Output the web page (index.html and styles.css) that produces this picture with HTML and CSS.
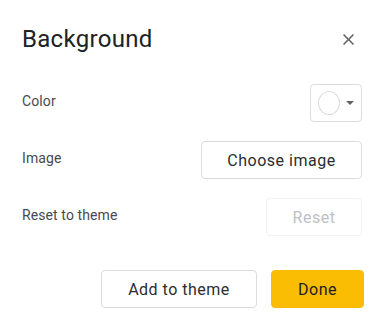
FILE: index.html
```html
<!doctype html>
<html lang="en">
<head>
<meta charset="utf-8" />
<title>Background</title>
<meta name="viewport" content="width=device-width, initial-scale=1" />
<link rel="stylesheet" href="styles.css">
</head>
<body>
  <div class="dialog">
    <!-- header -->
    <div class="header">
      <h1 class="title">Background</h1>
      <button class="close" aria-label="Close">
        <svg width="11" height="11" viewBox="5 5 14 14"><path fill="#5f6368" d="M19 6.41L17.59 5 12 10.59 6.41 5 5 6.41 10.59 12 5 17.59 6.41 19 12 13.41 17.59 19 19 17.59 13.41 12z"/></svg>
      </button>
    </div>

    <!-- settings -->
    <div class="rows">
      <div class="row">
        <span class="label">Color</span>
        <button class="swatch-btn" aria-label="Color">
          <span class="swatch"></span>
          <span class="caret"></span>
        </button>
      </div>
      <div class="row">
        <span class="label">Image</span>
        <button class="btn btn-wide">Choose image</button>
      </div>
      <div class="row">
        <span class="label">Reset to theme</span>
        <button class="btn btn-reset" disabled>Reset</button>
      </div>
    </div>

    <!-- footer -->
    <div class="footer">
      <button class="btn btn-add">Add to theme</button>
      <button class="btn btn-done">Done</button>
    </div>
  </div>
</body>
</html>
```

FILE: styles.css
```css
:root{
  --text:#202124;
  --label:#3c4043;
  --border:#dadce0;
  --yellow:#fbbc04;
}

*{margin:0;padding:0;box-sizing:border-box}
body{background:#fff;font-family:Roboto,"Liberation Sans",sans-serif;color:var(--text);}

.dialog{padding:24px 20px 0 22px;}

/* header */
.header{display:flex;justify-content:space-between;align-items:center;height:30px;margin-bottom:30px;}
.title{font-size:24px;font-weight:400;color:var(--text);letter-spacing:.3px;}
.close{display:flex;border:0;background:none;margin-right:8px;cursor:pointer;}

/* rows */
.rows{display:flex;flex-direction:column;gap:19px;}
.row{display:flex;justify-content:space-between;align-items:center;height:38px;}
.label{font-size:14px;color:#474a4e;margin-top:-4px;letter-spacing:.1px;}

/* buttons */
.btn{
  height:38px;border:1px solid var(--border);border-radius:4px;background:#fff;
  font-family:inherit;font-size:16px;font-weight:400;color:#2b2d30;
  letter-spacing:.5px;cursor:pointer;
}
.btn-wide{width:161px;}
.btn-reset{width:96px;border-color:#f1f3f4;color:#bdc1c6;cursor:default;}

.swatch-btn{
  display:flex;align-items:center;gap:6px;
  width:52px;height:38px;padding:0 7px;
  border:1px solid var(--border);border-radius:4px;background:#fff;cursor:pointer;
}
.swatch{width:24px;height:24px;border:1px solid var(--border);border-radius:50%;background:#fff;}
.caret{width:0;height:0;border-left:4px solid transparent;border-right:4px solid transparent;border-top:4px solid #5f6368;}

/* footer */
.footer{display:flex;justify-content:flex-end;gap:14px;margin:34px -2px 0 0;}
.btn-add{width:156px;}
.btn-done{width:93px;background:var(--yellow);border-color:var(--yellow);color:var(--text);}
```
